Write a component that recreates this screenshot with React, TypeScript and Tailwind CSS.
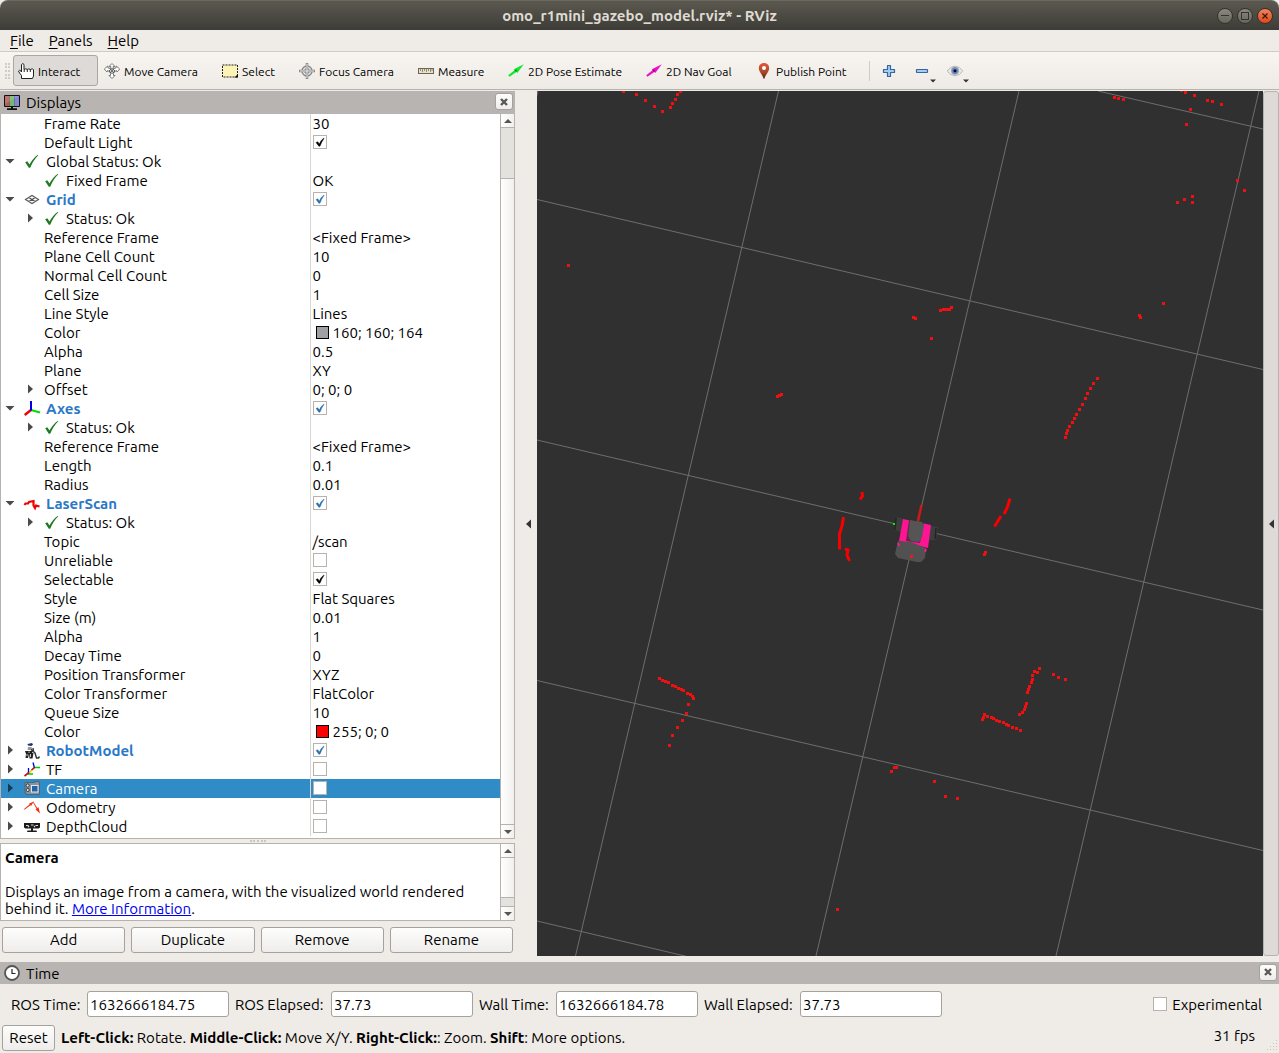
import type { ReactNode } from "react";

const svgBox = "h-4 w-4 shrink-0 overflow-visible";

/* ---------- toolbar icons ---------- */

const HandIcon = () => (
  <svg viewBox="0 0 16 16" className={svgBox} fill="#fff" stroke="#222" strokeWidth="1" strokeLinejoin="round">
    <path d="M3.500 15.500 V12.500 L1.500 10 L.5 8 Q1.200 6.500 3 8 L3.500 9 V1.500 Q5 -.5 6 1.500 V6.500 Q8 5 9.200 6.500 Q11 5.200 12.300 6.500 Q14.500 5.200 15.500 6.500 V13 L14.500 15.500 Z" />
    <path d="M6.200 6.500V9M9.300 6.500V9M12.300 6.500V9" fill="none" />
  </svg>
);

const MoveIcon = () => (
  <svg viewBox="0 0 16 16" className={svgBox} fill="#fff" stroke="#777" strokeWidth="1" strokeLinejoin="round">
    <path d="M8 .5 L11 3.500 H9.200 V5.500 L12 5 L12.300 3 L15.700 6 L13 9 L12.500 7.500 L10.500 8.500 L9.500 10.500 V12.500 H11 L8 15.500 L5 12.500 H6.500 V10.500 L5.500 8.500 L3.500 7.500 L3 9 L.3 6 L3.700 3 L4 5 L6.800 5.500 V3.500 H5 Z" />
    <path d="M5 8L8 5.500L11 8L8 10.500ZM6 5.500L10 10M10 5.500L6 10" fill="none" stroke="#555" />
  </svg>
);

const SelectIcon = () => (
  <svg viewBox="0 0 16 16" className={svgBox}>
    <rect x=".5" y="2" width="15" height="12" fill="#fdf3b4" stroke="#222" strokeDasharray="2 1" />
    <path d="M16 11V14.500H12.500Z" fill="#111" />
  </svg>
);

const FocusIcon = () => (
  <svg viewBox="0 0 16 16" className={svgBox} fill="none" stroke="#858585">
    <circle cx="8" cy="8" r="5" strokeWidth="1.300" />
    <circle cx="8" cy="8" r="2.500" />
    <path d="M8 0V16M0 8H16" strokeWidth="2.600" stroke="#8c8c8c" />
    <path d="M8 1V15M1 8H15" stroke="#eee" strokeWidth=".9" />
  </svg>
);

const MeasureIcon = () => (
  <svg viewBox="0 0 16 16" className={svgBox}>
    <rect x=".5" y="5.500" width="15" height="5" fill="#efe2b5" stroke="#666" />
    <path d="M2.500 6V8M4.500 6V9M6.500 6V8M8.500 6V9M10.500 6V8M12.500 6V9M14 6V8" stroke="#777" strokeWidth=".8" />
  </svg>
);

const ArrowIcon = ({ color, dark }: { color: string; dark: string }) => (
  <svg viewBox="0 0 16 16" className={svgBox}>
    <path d="M.2 12.300L6.500 7.300L5.800 6.300L15.800 1.200L9.300 10L8.400 9L1.500 13.800Z" fill={color} />
    <path d="M6.500 7.300L8.800 6.500L8.400 9Z" fill={dark} />
  </svg>
);

const PinIcon = () => (
  <svg viewBox="0 0 16 16" className={svgBox}>
    <defs>
      <linearGradient id="pin" x2="0" y2="1">
        <stop offset="0" stopColor="#e8573c" />
        <stop offset=".6" stopColor="#a5482a" />
        <stop offset="1" stopColor="#4f2413" />
      </linearGradient>
    </defs>
    <path d="M8 0C4.500 0 2.800 2.300 2.800 5.200C2.800 9 6.500 11 7.600 15.800H8.400C9.500 11 13.200 9 13.200 5.200C13.200 2.300 11.500 0 8 0Z" fill="url(#pin)" />
    <circle cx="8" cy="5" r="2" fill="#fff" />
  </svg>
);

const PlusIcon = () => (
  <svg viewBox="0 0 16 16" className={svgBox}>
    <path d="M6.500 2.500H9.500V6.500H13.500V9.500H9.500V13.500H6.500V9.500H2.500V6.500H6.500Z" fill="#a9cbec" stroke="#3465a4" strokeWidth="1.200" strokeLinejoin="round" />
  </svg>
);

const MinusIcon = () => (
  <svg viewBox="0 0 16 16" className={svgBox}>
    <rect x="2.500" y="6.500" width="11" height="3" rx=".5" fill="#a9cbec" stroke="#3465a4" strokeWidth="1.200" />
  </svg>
);

const EyeIcon = () => (
  <svg viewBox="0 0 16 16" className={svgBox}>
    <path d="M.2 8Q3.500 3.200 8 3.200T15.800 8Q12.500 12.800 8 12.800T.2 8Z" fill="#e9e9e9" stroke="#aaa" strokeWidth=".8" />
    <circle cx="8" cy="7.800" r="3.700" fill="#7186c4" stroke="#9aa" strokeWidth=".6" />
    <circle cx="8" cy="7.800" r="1.600" fill="#0a0a20" />
  </svg>
);

const DropMark = () => (
  <svg viewBox="0 0 6 4" className="absolute -right-[6px] -bottom-[4px] h-[4px] w-[6px]">
    <path d="M0 .5H6L3 3.500Z" fill="#333" />
  </svg>
);

/* ---------- panel icons ---------- */

const MonitorIcon = () => (
  <svg viewBox="0 0 16 16" className={svgBox}>
    <rect x="0" y="0" width="16" height="12" rx="1" fill="#111" />
    <rect x="1" y="1" width="4.700" height="10" fill="#b55a5a" />
    <rect x="5.700" y="1" width="4.600" height="10" fill="#6dbb6d" />
    <rect x="10.300" y="1" width="4.700" height="10" fill="#8585d6" />
    <path d="M1 1H15L1 9Z" fill="#fff" opacity=".15" />
    <path d="M7 12H9V13.300H13V15H3V13.300H7Z" fill="#111" />
  </svg>
);

const ClockIcon = () => (
  <svg viewBox="0 0 16 16" className={svgBox}>
    <circle cx="8" cy="8" r="7" fill="#fff" stroke="#555" strokeWidth="1.800" />
    <path d="M8 4V8.500H11.500" fill="none" stroke="#222" strokeWidth="1.200" />
  </svg>
);

const OkIcon = () => (
  <svg viewBox="0 0 16 16" className={svgBox}>
    <path d="M1.200 8.300L3.300 7.300L5.500 10.500Q9 4 14 .7L14.300 1.300Q9.500 6 6.200 13.700H4.800Z" fill="#1f7a1f" />
  </svg>
);

const GridIcon = () => (
  <svg viewBox="0 0 16 16" className={svgBox} fill="none" stroke="#555" strokeWidth="1.100">
    <path d="M1.500 7.500L8 3.500L14.500 7.500L8 11.500ZM4.700 5.500L11.300 9.500M11.300 5.500L4.700 9.500" />
  </svg>
);

const AxesIcon = () => (
  <svg viewBox="0 0 16 16" className={svgBox} strokeWidth="2">
    <path d="M7 9L16 11.500" stroke="#0d0" />
    <path d="M7 9L.7 14" stroke="#e00" strokeWidth="2.300" />
    <path d="M7 9.500V0" stroke="#00e" />
  </svg>
);

const LaserIcon = () => (
  <svg viewBox="0 0 16 16" className={svgBox}>
    <path d="M.5 9L1.500 7.500H4L5 6L9.500 5V9.500L11 12L12 9.500L15.500 10.500" fill="none" stroke="#f00000" strokeWidth="2.200" />
  </svg>
);

const RobotIcon = () => (
  <svg viewBox="0 0 16 16" className={svgBox}>
    <path d="M3.500 1L8 0L9 1.500L7.500 3L4 2.500Z" fill="#27356e" />
    <path d="M4 4H7.500L8.500 7H3.500Z" fill="#999" />
    <path d="M1 8H9L8 10H9.500L8.500 15.500H5.500L5 11L4 15H1.500L2 11Z" fill="#222" />
    <path d="M7 6.500L11 10L12.500 15H14.500L15.500 13.500M9 5L9.500 8" stroke="#333" strokeWidth="1.400" fill="none" />
    <path d="M5 8.500V10M6.500 11V14M3 11V13" stroke="#ddd" strokeWidth=".9" />
  </svg>
);

const TfIcon = () => (
  <svg viewBox="0 0 16 16" className={svgBox} strokeWidth="1.300" fill="none">
    <path d="M5.500 10.500L10.500 5.500" stroke="#e8d000" strokeWidth="1.500" />
    <path d="M10.500 5.500H16M4.500 9.500V12H9" stroke="#0c0" />
    <path d="M10.500 6L9 .5M4.500 11V6" stroke="#00e" />
    <path d="M10.500 5.500L7.500 8M5 10.500L.5 14" stroke="#c11" strokeWidth="1.600" />
  </svg>
);

const CameraIcon = () => (
  <svg viewBox="0 0 16 16" className={svgBox}>
    <path d="M1 1.500H11V.5H15V2H15.500V13.500H2V12H1Z" fill="#8795a1" stroke="#4c5a66" strokeWidth=".8" />
    <rect x="7.500" y="4.500" width="6.500" height="6.500" fill="#2464a4" stroke="#dde6ec" />
    <circle cx="3.700" cy="4.500" r="1.600" fill="#dde" stroke="#222" strokeWidth=".8" />
    <circle cx="3.700" cy="9" r="1.600" fill="#dde" stroke="#222" strokeWidth=".8" />
  </svg>
);

const OdometryIcon = () => (
  <svg viewBox="0 0 16 16" className={svgBox}>
    <path d="M0 9L5.500 4.500L5 3.800L10 1.300L7 6L6.500 5.200L.5 9.800Z" fill="#f03010" />
    <path d="M9.500 2L13.300 8L14.500 7.300L16 13.500L11.500 9.500L12.500 8.700L9 2.500Z" fill="#f03010" />
  </svg>
);

const DepthIcon = () => (
  <svg viewBox="0 0 16 16" className={svgBox}>
    <path d="M0 4H16V8.500L14.500 9.500H1.500L0 8.500Z" fill="#1c1c1c" />
    <path d="M7 9H9V11.500H12.500L13 13H3L3.500 11.500H7Z" fill="#1c1c1c" />
    <path d="M2 6.500H4.500M7 6H9.500M11.500 6.500H14M4 8L5 7M10 8L11 7" stroke="#ddd" strokeWidth="1.100" />
  </svg>
);

/* ---------- shared controls ---------- */

function CheckBox({ label, checked, blue }: { label: string; checked?: boolean; blue?: boolean }) {
  return (
    <span className="inline-grid h-[14px] w-[14px] shrink-0">
      <input
        type="checkbox"
        aria-label={label}
        defaultChecked={checked}
        className="peer col-start-1 row-start-1 h-[14px] w-[14px] appearance-none border border-[#b6b2ae] bg-white"
      />
      <svg
        viewBox="0 0 14 14"
        className={
          "pointer-events-none invisible col-start-1 row-start-1 h-[14px] w-[14px] peer-checked:visible " +
          (blue ? "text-[#2a6fb0]" : "text-black")
        }
      >
        <path d="M3 7.500L4.800 6.700L6.300 9Q8 5 10.800 3L11 3.600Q8.500 7 7 11.200H5.800Z" fill="currentColor" stroke="currentColor" strokeWidth=".4" />
      </svg>
    </span>
  );
}

const raised = "rounded-[3px] border border-[#a5a19d] bg-linear-to-b from-[#fdfdfc] to-[#eeedeb]";

function PushButton({ children, className = "" }: { children: ReactNode; className?: string }) {
  return <button className={raised + " h-[26px] leading-5 " + className}>{children}</button>;
}

function DockHeader({ icon, title, className }: { icon: ReactNode; title: string; className: string }) {
  return (
    <div className={"flex items-center bg-[#b8b4b1] pl-1 " + className}>
      {icon}
      <h2 className="ml-1.5 flex-1">{title}</h2>
      <button aria-label={"Close " + title} className={raised + " mb-0.5 flex h-[17px] w-[18px] items-center justify-center"}>
        <svg viewBox="0 0 8 8" className="h-2 w-2">
          <path d="M1 1L7 7M7 1L1 7" stroke="#5a5754" strokeWidth="2.400" />
        </svg>
      </button>
    </div>
  );
}

function ScrollBar({ thumb, label }: { thumb: ReactNode; label: string }) {
  return (
    <div className="flex w-[14px] shrink-0 flex-col border-l border-[#b6b2ae] bg-linear-to-r from-white to-[#f1f0ee]">
      <button aria-label={label + " up"} className="flex h-[14px] items-center justify-center border-b border-[#b6b2ae]">
        <svg viewBox="0 0 8 4" className="h-1 w-2"><path d="M4 0L8 4H0Z" fill="#555" /></svg>
      </button>
      {thumb}
      <button aria-label={label + " down"} className="flex h-[14px] items-center justify-center border-t border-[#b6b2ae]">
        <svg viewBox="0 0 8 4" className="h-1 w-2"><path d="M4 4L8 0H0Z" fill="#555" /></svg>
      </button>
    </div>
  );
}

/* ---------- display tree ---------- */

type Row = {
  name: string;
  value?: string;
  check?: boolean;
  swatch?: "gray" | "red";
  icon?: ReactNode;
  open?: boolean;
  display?: boolean;
  child?: boolean;
  selected?: boolean;
};

const rows: Row[] = [
  { name: "Frame Rate", value: "30", child: true },
  { name: "Default Light", check: true, child: true },
  { name: "Global Status: Ok", icon: <OkIcon />, open: true },
  { name: "Fixed Frame", value: "OK", icon: <OkIcon />, child: true },
  { name: "Grid", icon: <GridIcon />, open: true, display: true, check: true },
  { name: "Status: Ok", icon: <OkIcon />, open: false, child: true },
  { name: "Reference Frame", value: "<Fixed Frame>", child: true },
  { name: "Plane Cell Count", value: "10", child: true },
  { name: "Normal Cell Count", value: "0", child: true },
  { name: "Cell Size", value: "1", child: true },
  { name: "Line Style", value: "Lines", child: true },
  { name: "Color", value: "160; 160; 164", swatch: "gray", child: true },
  { name: "Alpha", value: "0.5", child: true },
  { name: "Plane", value: "XY", child: true },
  { name: "Offset", value: "0; 0; 0", open: false, child: true },
  { name: "Axes", icon: <AxesIcon />, open: true, display: true, check: true },
  { name: "Status: Ok", icon: <OkIcon />, open: false, child: true },
  { name: "Reference Frame", value: "<Fixed Frame>", child: true },
  { name: "Length", value: "0.1", child: true },
  { name: "Radius", value: "0.01", child: true },
  { name: "LaserScan", icon: <LaserIcon />, open: true, display: true, check: true },
  { name: "Status: Ok", icon: <OkIcon />, open: false, child: true },
  { name: "Topic", value: "/scan", child: true },
  { name: "Unreliable", check: false, child: true },
  { name: "Selectable", check: true, child: true },
  { name: "Style", value: "Flat Squares", child: true },
  { name: "Size (m)", value: "0.01", child: true },
  { name: "Alpha", value: "1", child: true },
  { name: "Decay Time", value: "0", child: true },
  { name: "Position Transformer", value: "XYZ", child: true },
  { name: "Color Transformer", value: "FlatColor", child: true },
  { name: "Queue Size", value: "10", child: true },
  { name: "Color", value: "255; 0; 0", swatch: "red", child: true },
  { name: "RobotModel", icon: <RobotIcon />, open: false, display: true, check: true },
  { name: "TF", icon: <TfIcon />, open: false, check: false },
  { name: "Camera", icon: <CameraIcon />, open: false, check: false, selected: true },
  { name: "Odometry", icon: <OdometryIcon />, open: false, check: false },
  { name: "DepthCloud", icon: <DepthIcon />, open: false, check: false },
];

function TreeRow({ row }: { row: Row }) {
  return (
    <tr className={row.selected ? "h-[19px] bg-[#308cc6] text-white" : "h-[19px]"}>
      <td className="p-0">
        <div className={"flex h-[19px] items-center " + (row.child ? "pl-[20px]" : "")}>
          <span className="mr-1 flex w-[19px] shrink-0 pl-1">
            {row.open !== undefined && (
              <button aria-label={"Toggle " + row.name} className="pb-px">
                <svg viewBox="0 0 10 10" className={"h-2.5 w-2.5 " + (row.selected ? "text-[#173a52]" : "text-[#4a4a4a]")}>
                  <path d={row.open ? "M.5 3H9.500L5 7.500Z" : "M3 .5V9.500L8 5Z"} fill="currentColor" />
                </svg>
              </button>
            )}
          </span>
          {row.icon && <span className="mr-[6px] flex">{row.icon}</span>}
          <span className={row.display ? "font-bold text-[#2a78c6]" : ""}>{row.name}</span>
        </div>
      </td>
      <td className="border-l border-[#d8d5d2] p-0 pl-0.5">
        <div className="flex h-[19px] items-center">
          {row.check !== undefined && (
            <span className="mb-px flex">
              <CheckBox label={row.name} checked={row.check} blue={row.display} />
            </span>
          )}
          {row.swatch && (
            <span
              className={
                "mr-1 ml-[3px] h-[13px] w-[13px] border border-black " + (row.swatch === "red" ? "bg-[#ff0000]" : "bg-[#a0a0a4]")
              }
            />
          )}
          {row.value}
        </div>
      </td>
    </tr>
  );
}

/* ---------- 3D view ---------- */

const points: [number, number][] = [
  [623, 91], [636, 94], [645, 100], [654, 106], [662, 111], [670, 107], [672, 103], [675, 99], [677, 94], [680, 91],
  [1114, 97], [1118, 98], [1123, 99], [1181, 90], [1185, 92], [1194, 95], [1207, 100], [1212, 101], [1221, 104],
  [1190, 109], [1186, 124], [1177, 202], [1184, 199], [1192, 196], [1192, 202], [1237, 180], [1244, 190],
  [568, 265], [913, 317], [915, 318], [931, 338], [940, 310], [943, 309], [946, 309], [949, 309], [951, 307],
  [1139, 315], [1140, 317], [1163, 303], [777, 396], [779, 395], [781, 394],
  [1097, 378], [1093, 383], [1090, 388], [1087, 393], [1085, 398], [1082, 404], [1079, 409], [1076, 414],
  [1074, 418], [1072, 422], [1069, 426], [1067, 430], [1066, 433], [1065, 437],
  [659, 678], [662, 680], [665, 681], [668, 682], [672, 685], [675, 686], [678, 688], [681, 689], [683, 690],
  [687, 693], [690, 694], [692, 696], [693, 698], [688, 704], [686, 713], [682, 720], [677, 727], [672, 735], [669, 745],
  [1039, 668], [1037, 672], [1034, 671], [1032, 675], [1032, 679], [1031, 682], [1029, 686], [1028, 689], [1027, 692],
  [1026, 703], [1025, 706], [1024, 709], [1022, 712], [1019, 714], [1053, 674], [1058, 677], [1065, 679],
  [984, 714], [983, 717], [982, 719], [987, 716], [991, 717], [993, 718], [996, 720], [999, 721], [1003, 722],
  [1006, 724], [1008, 725], [1012, 727], [1016, 728], [1020, 730],
  [891, 771], [894, 767], [896, 767], [934, 781], [945, 796], [957, 798], [837, 909],
  [985, 552], [984, 554],
];

function RobotView() {
  return (
    <svg
      viewBox="537 91 726 865"
      preserveAspectRatio="xMidYMid slice"
      role="img"
      aria-label="3D view"
      className="absolute inset-0 h-full w-full"
    >
      <g stroke="#6e6e6e" strokeWidth="1" fill="none">
        <path d="M1098 91L1263 129M537 199.500L1263 369.500M537 440L1263 610M537 680.500L1263 850.500M537 921L687 956.500" />
        <path d="M538 91L536 99M778.500 91L575.500 956M1019 91L816 956M1259 91L1056 956" />
      </g>
      <path d="M897 517L904 519L901 532L894 530Z" fill="#3d3d3d" />
      <path d="M930 526L938 527L936 540L929 540Z" fill="#3d3d3d" />
      <path d="M896 518L895 530M936 528L935 539" stroke="#252525" strokeWidth="1.500" />
      <path d="M903 519L931 525L928 548L899 541Z" fill="#ff1493" />
      <path d="M909 520L924 523L920 543L906 541Z" fill="#6b2449" />
      <path d="M910 520L915 521L922 522L924 525L922 537L919 542L911 541L908 536Z" fill="#555" />
      <path d="M898 541L911 542L926 548L925 558L921 562L917 562L898 558L895 554Z" fill="#515151" />
      <path d="M898 543L899 546M926 549L925 552" stroke="#ff1493" strokeWidth="2" />
      <path d="M918 521L921.500 505" stroke="#d01818" strokeWidth="2.500" />
      <rect x="893" y="523" width="2" height="2" fill="#0e0" />
      <rect x="910" y="555" width="3" height="3" fill="#f01818" />
      <g fill="none" stroke="#f80000" strokeWidth="3">
        <path d="M843.500 517L842 526L839.500 534V549.500" />
        <path d="M845 549L848 550L847 555L849.500 561" />
        <path d="M862 492L862.500 496L860 499.500" />
        <path d="M1010 498.500L1007.500 507L1004 514M1001 516L994.500 526.500" />
      </g>
      <g fill="#f01010">
        {points.map(([x, y], i) => (
          <rect key={i} x={x - 1} y={y - 1} width="3" height="3" />
        ))}
      </g>
    </svg>
  );
}

/* ---------- toolbar ---------- */

const tools: { label: string; icon: ReactNode; width: string; active?: boolean }[] = [
  { label: "Interact", icon: <HandIcon />, width: "w-[85px] mr-px", active: true },
  { label: "Move Camera", icon: <MoveIcon />, width: "w-[118px]" },
  { label: "Select", icon: <SelectIcon />, width: "w-[77px]" },
  { label: "Focus Camera", icon: <FocusIcon />, width: "w-[119px]" },
  { label: "Measure", icon: <MeasureIcon />, width: "w-[90px]" },
  { label: "2D Pose Estimate", icon: <ArrowIcon color="#10e830" dark="#087018" />, width: "w-[138px]" },
  { label: "2D Nav Goal", icon: <ArrowIcon color="#f010c8" dark="#700860" />, width: "w-[110px]" },
  { label: "Publish Point", icon: <PinIcon />, width: "w-[118px]" },
];

function TimeField({ id, label, value, width }: { id: string; label: string; value: string; width: string }) {
  return (
    <div className="mr-1.5 flex items-center">
      <label htmlFor={id} className={"whitespace-nowrap " + width}>{label}</label>
      <input id={id} defaultValue={value} className="h-[26px] w-[142px] rounded-[3px] border border-[#a5a19d] bg-white px-0.5" />
    </div>
  );
}

const Dots = () => <div className="w-4 border-t-2 border-dotted border-[#c9c5c1]" />;

export default function App() {
  return (
    <div className="flex min-h-screen flex-col bg-[#efebe7] font-['Ubuntu','Noto_Sans',sans-serif] text-[15px] leading-[17px] text-black">
      <header className="flex h-[30px] items-center rounded-t-lg border-t border-[#6b685f] bg-linear-to-b from-[#5b594f] to-[#3d3c37]">
        <span className="w-20" />
        <h1 className="flex-1 text-center font-bold text-[#dfdbd2]">omo_r1mini_gazebo_model.rviz* - RViz</h1>
        <div className="flex w-20 justify-end gap-1 pr-1.5">
          <button aria-label="Minimize" className="flex h-4 w-4 items-center justify-center rounded-full border border-[#33322e] bg-linear-to-b from-[#8b897f] to-[#66645c]">
            <span className="h-px w-2 bg-[#33322e]" />
          </button>
          <button aria-label="Maximize" className="flex h-4 w-4 items-center justify-center rounded-full border border-[#33322e] bg-linear-to-b from-[#8b897f] to-[#66645c]">
            <span className="h-2 w-2 border border-[#33322e]" />
          </button>
          <button aria-label="Close" className="flex h-4 w-4 items-center justify-center rounded-full border border-[#33322e] bg-linear-to-b from-[#f5815a] to-[#dd4814]">
            <svg viewBox="0 0 6 6" className="h-1.5 w-1.5"><path d="M.5 .5L5.500 5.500M5.500 .5L.5 5.500" stroke="#33180c" strokeWidth="1.200" /></svg>
          </button>
        </div>
      </header>

      <nav className="flex h-[22px] items-center gap-[15px] border-b border-[#cfcbc7] pl-2.5">
        <button><span className="underline underline-offset-2">F</span>ile</button>
        <button><span className="underline underline-offset-2">P</span>anels</button>
        <button><span className="underline underline-offset-2">H</span>elp</button>
      </nav>

      <div role="toolbar" className="mb-px flex h-[38px] items-center border-b border-[#b6b2ae] bg-linear-to-b from-[#f8f5f1] to-[#eeebe7] text-[12px] whitespace-nowrap">
        <span className="mr-[3px] ml-[5px] h-4 w-[5px] border-x-2 border-dotted border-[#cfcbc7]" />
        {tools.map((t) => (
          <button
            key={t.label}
            className={
              "flex h-[31px] items-center gap-1 border pl-1 " +
              t.width +
              (t.active ? " rounded-[3px] border-[#aaa6a3] bg-[#dddad7]" : " border-transparent")
            }
          >
            {t.icon}
            <span className="pt-px">{t.label}</span>
          </button>
        ))}
        <span className="h-5 w-px bg-[#cfcbc7]" />
        <button aria-label="Add tool" className="ml-[11px]"><PlusIcon /></button>
        <button aria-label="Remove tool" className="relative ml-[17px]"><MinusIcon /><DropMark /></button>
        <button aria-label="Tool visibility" className="relative ml-[17px]"><EyeIcon /><DropMark /></button>
      </div>

      <main className="flex flex-1">
        <section className="flex w-[515px] shrink-0 flex-col">
          <DockHeader icon={<MonitorIcon />} title="Displays" className="h-[23px] pr-0.5" />
          <div className="flex flex-1 border border-t-0 border-[#b6b2ae] bg-white">
            <div className="flex-1 pb-px">
              <table className="w-full table-fixed border-collapse">
                <colgroup>
                  <col className="w-[309px]" />
                  <col />
                </colgroup>
                <tbody>
                  {rows.map((row, i) => (
                    <TreeRow key={i} row={row} />
                  ))}
                </tbody>
              </table>
            </div>
            <ScrollBar
              label="Scroll displays"
              thumb={
                <div className="flex flex-1 flex-col">
                  <div className="h-[51px] border-b border-[#b6b2ae] bg-[#e4e2df]" />
                </div>
              }
            />
          </div>
          <div className="flex h-1 items-center justify-center"><Dots /></div>
          <div className="flex h-[78px] border border-[#b6b2ae] bg-white">
            <div className="flex-1 pt-[5px] pr-2 pl-1">
              <p className="font-bold">Camera</p>
              <p className="mt-[17px]">
                Displays an image from a camera, with the visualized world rendered behind it.{" "}
                <a href="#camera" className="text-[#0000ee] underline">More Information</a>.
              </p>
            </div>
            <ScrollBar
              label="Scroll description"
              thumb={
                <div className="flex flex-1 flex-col justify-end">
                  <div className="h-[9px] border-t border-[#b6b2ae] bg-[#e4e2df]" />
                </div>
              }
            />
          </div>
          <div className="mt-1.5 mb-[9px] flex gap-1.5 px-0.5">
            {["Add", "Duplicate", "Remove", "Rename"].map((b) => (
              <PushButton key={b} className="flex-1">{b}</PushButton>
            ))}
          </div>
        </section>

        <button aria-label="Collapse left panel" className="flex w-[22px] shrink-0 items-center justify-center pb-1.5 pl-1">
          <svg viewBox="0 0 5 10" className="h-2.5 w-[5px]"><path d="M5 .5V9.500L0 5Z" fill="#333" /></svg>
        </button>

        <div className="flex min-w-0 flex-1 flex-col">
          <div className="relative flex-1 overflow-hidden bg-[#303030]"><RobotView /></div>
          <div className="h-1.5" />
        </div>

        <button aria-label="Collapse right panel" className="mb-1.5 flex w-4 shrink-0 items-center justify-center rounded-[3px] border border-[#b6b2ae] bg-[#dddad7]">
          <svg viewBox="0 0 5 10" className="h-2.5 w-[5px]"><path d="M5 .5V9.500L0 5Z" fill="#333" /></svg>
        </button>
      </main>

      <section>
        <DockHeader icon={<ClockIcon />} title="Time" className="h-[22px] pr-0.5" />
        <div className="flex h-10 items-center pr-[17px] pl-[11px]">
          <TimeField id="ros-time" label="ROS Time:" value="1632666184.75" width="w-[76px]" />
          <TimeField id="ros-elapsed" label="ROS Elapsed:" value="37.73" width="w-[96px]" />
          <TimeField id="wall-time" label="Wall Time:" value="1632666184.78" width="w-[77px]" />
          <TimeField id="wall-elapsed" label="Wall Elapsed:" value="37.73" width="w-[96px]" />
          <label className="ml-auto flex items-center gap-[5px]">
            <CheckBox label="Experimental" />
            Experimental
          </label>
        </div>
      </section>

      <footer className="flex h-[29px] items-center pb-0.5 pl-0.5">
        <PushButton className="w-[53px]">Reset</PushButton>
        <p className="ml-1.5 flex-1">
          <b>Left-Click:</b> Rotate. <b>Middle-Click:</b> Move X/Y. <b>Right-Click:</b>: Zoom. <b>Shift</b>: More options.
        </p>
        <span className="mr-3 pb-1">31 fps</span>
        <svg viewBox="0 0 12 12" className="h-3 w-3 self-end" fill="#c9c5c1">
          <path d="M9 1h1v1h-1zM9 4h1v1h-1zM6 4h1v1h-1zM9 7h1v1h-1zM6 7h1v1h-1zM3 7h1v1h-1zM9 10h1v1h-1zM6 10h1v1h-1zM3 10h1v1h-1zM0 10h1v1h-1z" />
        </svg>
      </footer>
    </div>
  );
}
